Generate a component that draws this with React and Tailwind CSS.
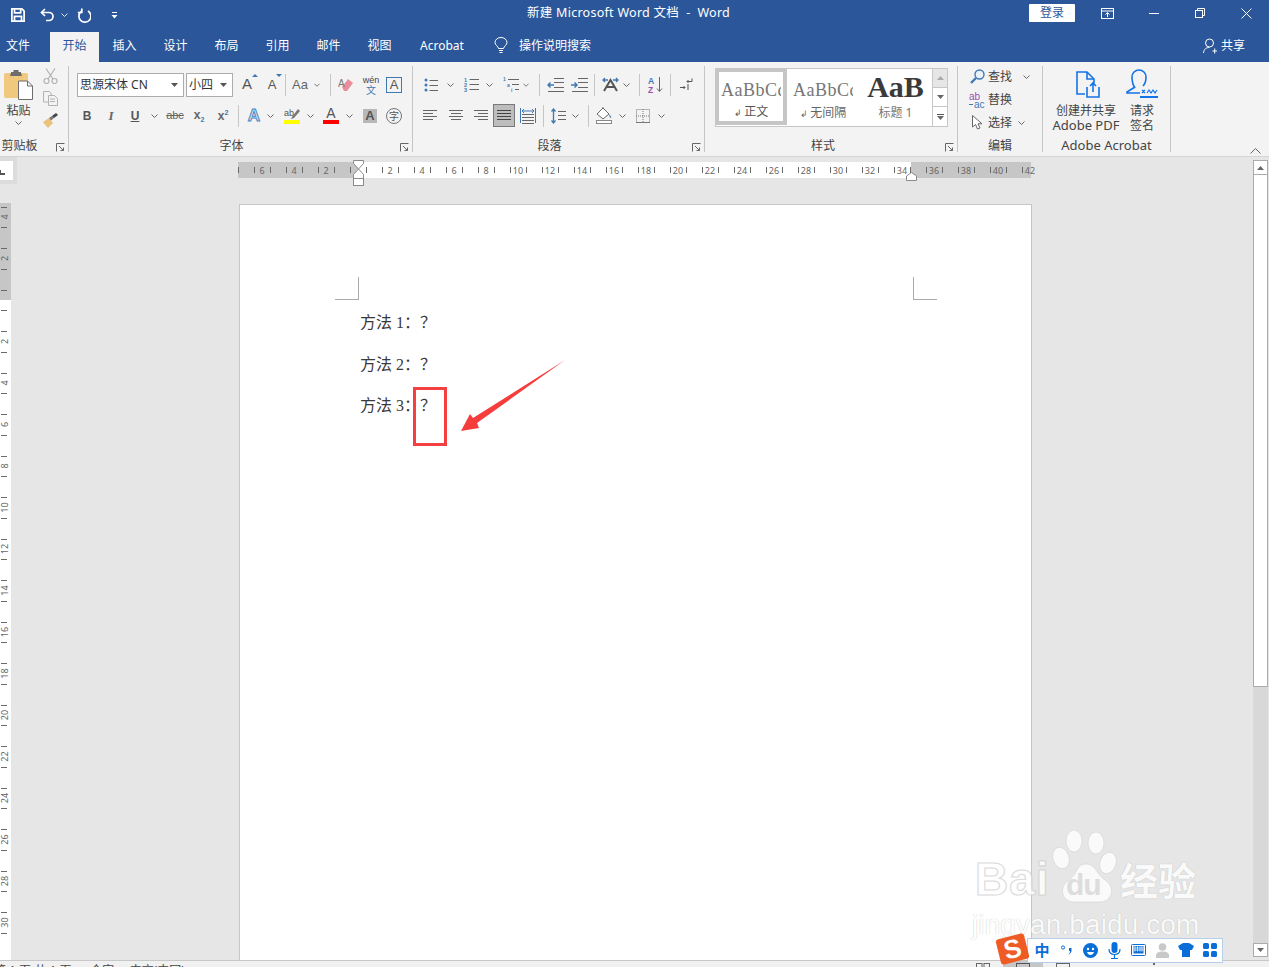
import React from "react";

const Chev = ({ c = "#666" }) => (
  <svg width="7" height="4" viewBox="0 0 7 4" fill="none" stroke={c} strokeWidth="1"><path d="M0.5 0.5 3.5 3.5 6.5 0.5" /></svg>
);
const Cell = ({ className = "w-[24px]", children }) => (
  <div className={`flex h-full items-center justify-center shrink-0 ${className}`}>{children}</div>
);
const Sep = ({ className = "" }) => <div className={`w-px h-[22px] shrink-0 bg-[#c6c6c6] ${className}`} />;
const Launcher = () => (
  <svg className="absolute right-[3px] bottom-0" width="9" height="9" viewBox="0 0 9 9" fill="none" stroke="#666" strokeWidth="1">
    <path d="M0.5 8.5V0.5H8.5" /><path d="M3 3 7.5 7.5M7.5 4.5V7.5H4.5" />
  </svg>
);
const Group = ({ className, label, labelClass = "text-[12px]", launcher, children }) => (
  <div className={`relative flex flex-col h-[86px] shrink-0 border-r border-[#c6c6c6] ${className}`}>
    <div className="h-[72px]">{children}</div>
    <div className={`h-[14px] leading-[15px] text-center text-[#444] whitespace-nowrap ${labelClass}`}>{label}</div>
    {launcher && <Launcher />}
  </div>
);
const Row = ({ className = "", children }) => <div className={`flex items-center h-[23px] ${className}`}>{children}</div>;
const Lines = ({ rows, c = "#666" }) => (
  <svg width="16" height="14" viewBox="0 0 16 14" stroke={c} strokeWidth="1">
    {rows.map((r, i) => <path key={i} d={`M${r[0]} ${r[2] + 0.5}H${r[1]}`} />)}
  </svg>
);

function Ruler() {
  const ticks = [];
  for (let x = 238; x <= 1031; x += 16) ticks.push(x);
  const labels = [];
  for (let k = -3; k <= 21; k++) if (k !== 0) labels.push({ x: 358 + 32 * k, t: Math.abs(k) * 2 });
  return (
    <svg className="ml-[238px] block overflow-visible" width="793" height="16" viewBox="238 162 793 16">
      <rect x="238" y="162" width="120" height="16" fill="#c6c6c6" />
      <rect x="358" y="162" width="553" height="16" fill="#fff" />
      <rect x="911" y="162" width="120" height="16" fill="#c6c6c6" />
      {ticks.map((x) => <rect key={x} x={x} y="167" width="1" height="6" fill="#6a6a6a" />)}
      {labels.map((l) => (
        <text key={l.x} x={l.x} y="174" textAnchor="middle" fontSize="9" fill="#666" fontFamily="Noto Sans">{l.t}</text>
      ))}
    </svg>
  );
}

function VRuler() {
  const items = [];
  for (let k = -2; k <= 15; k++) {
    const y = 97 + 41.5 * k;
    if (k !== 0) items.push(<text key={k} x="0" y="0" transform={`translate(7.5 ${y}) rotate(-90)`} textAnchor="middle" fontSize="9" fill="#666" fontFamily="Noto Sans">{Math.abs(k) * 2}</text>);
  }
  const ticks = [];
  for (let i = 0; i < 36; i++) {
    const y = 3.6 + 20.75 * i;
    ticks.push(<rect key={i} x="1" y={Math.round(y)} width="6" height="1" fill="#6a6a6a" />);
  }
  return (
    <svg className="block" width="12" height="757" viewBox="0 0 12 757">
      <rect width="11" height="97" fill="#c6c6c6" />
      <rect y="97" width="11" height="660" fill="#fff" />
      {ticks}
      {items}
    </svg>
  );
}

const IconSave = () => (
  <svg width="14" height="14" viewBox="0 0 16 16" fill="none" stroke="#fff" strokeWidth="2">
    <path d="M1 1H12.5L15 3.5V15H1Z" /><path d="M4 1V5.5H11V1" /><path d="M4 15V9.5H12V15" />
  </svg>
);
const IconUndo = () => (
  <svg width="15" height="14" viewBox="0 0 15 14" fill="none" stroke="#fff" strokeWidth="1.7">
    <path d="M1.5 4.5H9A4 4 0 0 1 9 12.5H6" /><path d="M5 1 1.5 4.5 5 8" />
  </svg>
);
const IconRedo = () => (
  <svg width="14" height="15" viewBox="0 0 14 15" fill="none" stroke="#fff" strokeWidth="1.7">
    <path d="M4.5 3.2A6 6 0 1 0 11 3" /><path d="M4.8 0.5V4.5H0.8" />
  </svg>
);

const TitleBar = () => (
  <div className="flex items-center h-[31px] bg-[#2b579a] text-white shrink-0">
    <div className="flex items-center w-[527px] h-full pb-[1px]">
      <div className="w-[11px]" />
      <IconSave />
      <div className="w-[15px]" />
      <IconUndo />
      <div className="w-[6px]" />
      <Chev c="#dfe6f0" />
      <div className="w-[9px]" />
      <IconRedo />
      <div className="w-[20px]" />
      <svg width="7" height="7" viewBox="0 0 7 7" fill="#fff"><rect x="1" y="0" width="5" height="1" /><path d="M0.5 3H6.5L3.5 6.5Z" /></svg>
    </div>
    <div className="text-[12.5px] pb-[4px] whitespace-pre tracking-[0.27px]">新建 Microsoft Word 文档  -  Word</div>
    <div className="ml-auto flex items-center h-full pb-[5px]">
      <div className="w-[46px] h-[18px] bg-white rounded-[1px] text-[#2b579a] text-[12px] leading-[18px] text-center">登录</div>
      <div className="w-[26px]" />
      <svg width="13" height="11" viewBox="0 0 13 11" fill="none" stroke="#fff"><rect x="0.5" y="0.5" width="12" height="10" /><path d="M0.5 3H12.5M6.5 9V5M4.5 6.5 6.5 4.5 8.5 6.5" /></svg>
      <div className="w-[35px]" />
      <svg width="10" height="1" viewBox="0 0 10 1"><rect width="10" height="1" fill="#fff" /></svg>
      <div className="w-[36px]" />
      <svg width="10" height="10" viewBox="0 0 10 10" fill="none" stroke="#fff"><rect x="0.5" y="2.5" width="7" height="7" /><path d="M2.5 2.5V0.5H9.5V7.5H7.5" /></svg>
      <div className="w-[36px]" />
      <svg width="11" height="11" viewBox="0 0 11 11" fill="none" stroke="#fff"><path d="M0.5 0.5 10.5 10.5M10.5 0.5 0.5 10.5" /></svg>
      <div className="w-[17px]" />
    </div>
  </div>
);

const Tab = ({ children }) => <div className="w-[51px] text-center">{children}</div>;
const TabBar = () => (
  <div className="flex items-end h-[31px] bg-[#2b579a] text-white text-[12px] shrink-0">
    <div className="w-[36px] h-full leading-[29px] text-center">文件</div>
    <div className="ml-[14px] w-[49px] h-[30px] leading-[28px] bg-[#f3f3f3] text-[#2b579a] text-center">开始</div>
    <div className="flex h-full items-center pb-[2px]">
      <Tab>插入</Tab><Tab>设计</Tab><Tab>布局</Tab><Tab>引用</Tab><Tab>邮件</Tab><Tab>视图</Tab>
      <div className="ml-[14px] w-[46px] text-center">Acrobat</div>
      <div className="ml-[28px] w-[16px] flex justify-center">
        <svg width="14" height="17" viewBox="0 0 14 17" fill="none" stroke="#fff"><path d="M4.5 11.5C4 9 1 8 1 5.5A6 5 0 0 1 13 5.5C13 8 10 9 9.5 11.5Z" /><path d="M5 13.5H9M5.5 15.5H8.5" /></svg>
      </div>
      <div className="ml-[10px]">操作说明搜索</div>
    </div>
    <div className="ml-auto flex h-full items-center pr-[24px] pb-[2px]">
      <svg width="14" height="16" viewBox="0 0 14 16" fill="none" stroke="#fff"><circle cx="6.5" cy="5" r="4" /><path d="M0.5 15C1 11 3 9.5 6.5 9.5M9.5 13H14M11.7 10.5V15.5" /></svg>
      <span className="ml-[4px]">共享</span>
    </div>
  </div>
);

const Select = ({ className, text }) => (
  <div className={`flex items-center justify-between self-start h-[24px] bg-white border border-[#acacac] pl-[2px] pr-[5px] text-[12px] text-[#333] whitespace-pre ${className}`}>
    <span>{text}</span>
    <svg width="7" height="4" viewBox="0 0 7 4" fill="#555"><path d="M0 0H7L3.5 4Z" /></svg>
  </div>
);
const Ltr = ({ className = "", children }) => <span className={`font-['Liberation_Sans',sans-serif] ${className}`}>{children}</span>;

const Clipboard = () => (
  <Group className="w-[69px]" label={<span className="block pr-[29px]">剪贴板</span>} launcher>
    <div className="flex h-full">
      <div className="w-[37px] flex flex-col items-center pt-[4px]">
        <svg width="29" height="30" viewBox="0 0 29 30">
          <rect x="0" y="3" width="24" height="25" rx="2" fill="#f0c87e" />
          <path d="M7 3V2H9.5V0H14.5V2H17V3L18 6H6Z" fill="#6d6d6d" />
          <path d="M14.5 11H23.5L28.5 16V29.5H14.5Z" fill="#fff" stroke="#6d6d6d" />
          <path d="M23.5 11V16H28.5" fill="none" stroke="#6d6d6d" />
        </svg>
        <div className="text-[12px] leading-[14px] mt-[4px] text-[#444]">粘贴</div>
        <div className="mt-[3px]"><Chev /></div>
      </div>
      <div className="flex flex-col items-center w-[26px] pt-[2px]">
        <svg width="15" height="16" viewBox="0 0 15 16" fill="none" stroke="#b2b2b2" strokeWidth="1.2"><path d="M3 0.5 10 11M12 0.5 5 11" /><circle cx="3.5" cy="13" r="2.5" /><circle cx="11.5" cy="13" r="2.5" /></svg>
        <svg className="mt-[7px]" width="15" height="15" viewBox="0 0 15 15" fill="none" stroke="#b2b2b2"><path d="M0.5 0.5H6.5L8 2V11H0.5Z" fill="#f3f3f3" /><path d="M5.5 4.5H11.5L14.5 7.5V14.5H5.5Z" fill="#f3f3f3" /><path d="M7 8H12M7 10.5H12" /></svg>
        <svg className="mt-[7px]" width="16" height="15" viewBox="0 0 16 15"><path d="M1 9 7 5 11 10 6 15Q3 12 1 9Z" fill="#eac27c" /><path d="M7 5 10 3 12 5 9 7.5 11 10Z" fill="#777" /><path d="M10 3 14 0 16 2 12 5Z" fill="#444" /></svg>
      </div>
    </div>
  </Group>
);

const FontGroup = () => (
  <Group className="w-[344px]" label={<span className="block pr-[18px]">字体</span>} launcher>
    <div className="pt-[7px]">
      <Row className="pl-[8px]">
        <Select className="w-[107px]" text="思源宋体 CN" />
        <Select className="w-[47px] ml-[2px]" text="小四" />
        <Cell className="w-[24px] ml-[2px]"><Ltr className="text-[15px] text-[#555] relative">A<svg className="absolute -right-[6px] top-[1px]" width="6" height="3" viewBox="0 0 6 3" fill="#3f79b5"><path d="M0 3 3 0 6 3Z" /></svg></Ltr></Cell>
        <Cell className="w-[24px] ml-[1px]"><Ltr className="text-[13px] text-[#555] relative">A<svg className="absolute -right-[6px] -top-[1px]" width="6" height="3" viewBox="0 0 6 3" fill="#3f79b5"><path d="M0 0 3 3 6 0Z" /></svg></Ltr></Cell>
        <Sep className="ml-[1px]" />
        <Cell className="w-[28px]"><Ltr className="text-[13px] text-[#666]">Aa</Ltr></Cell>
        <Cell className="w-[6px]"><Chev /></Cell>
        <Sep className="ml-[10px]" />
        <Cell className="w-[24px] ml-[3px]">
          <svg width="16" height="16" viewBox="0 0 16 16"><path d="M4 10 10 2 15 6 9 14H6Z" fill="#ea8e9c" /><text x="0" y="10" fontSize="10" fill="#777" fontFamily="Liberation Sans">A</text></svg>
        </Cell>
        <Cell className="w-[24px] ml-[1px]">
          <div className="flex flex-col items-center leading-[10px]">
            <Ltr className="text-[9px] text-[#444]">wén</Ltr>
            <span className="text-[10px] text-[#3f79b5]">文</span>
          </div>
        </Cell>
        <Cell className="w-[22px]"><div className="w-[16px] h-[16px] border border-[#3f79b5] flex items-center justify-center"><Ltr className="text-[13px] leading-[14px] text-[#555]">A</Ltr></div></Cell>
      </Row>
      <Row className="mt-[8px] pl-[6px]">
        <Cell><Ltr className="text-[12px] font-bold text-[#555]">B</Ltr></Cell>
        <Cell><span className="font-['Liberation_Serif',serif] text-[13px] italic font-bold text-[#666]">I</span></Cell>
        <Cell><Ltr className="text-[12px] font-bold underline text-[#555]">U</Ltr></Cell>
        <Cell className="w-[14px]"><Chev /></Cell>
        <Cell className="w-[24px] ml-[2px]"><Ltr className="text-[11px] line-through text-[#666]">abc</Ltr></Cell>
        <Cell><Ltr className="text-[12px] font-bold text-[#666]">x<span className="text-[7px] text-[#3f79b5] align-sub">2</span></Ltr></Cell>
        <Cell><Ltr className="text-[12px] font-bold text-[#666]">x<span className="text-[7px] text-[#3f79b5] align-super">2</span></Ltr></Cell>
        <Sep className="ml-[3px]" />
        <Cell className="w-[24px] ml-[3px]"><Ltr className="text-[17px] text-[#dbe7f4] font-bold [-webkit-text-stroke:1px_#4a86c5]">A</Ltr></Cell>
        <Cell className="w-[8px]"><Chev /></Cell>
        <Cell className="w-[24px] ml-[6px]">
          <div className="flex flex-col items-center">
            <svg width="16" height="12" viewBox="0 0 16 12"><text x="0" y="8" fontSize="9" fill="#555" fontFamily="Liberation Sans">ab</text><path d="M8 9 14 1 16 3 10 10 7 11Z" fill="#777" /></svg>
            <div className="w-[16px] h-[4px] bg-[#ffff00]" />
          </div>
        </Cell>
        <Cell className="w-[12px]"><Chev /></Cell>
        <Cell className="w-[24px] ml-[3px]">
          <div className="flex flex-col items-center">
            <Ltr className="text-[14px] leading-[13px] text-[#555]">A</Ltr>
            <div className="w-[16px] h-[4px] bg-[#ff0000]" />
          </div>
        </Cell>
        <Cell className="w-[12px]"><Chev /></Cell>
        <Cell className="w-[24px] ml-[3px]"><div className="w-[14px] h-[14px] bg-[#b8b8b8] flex items-center justify-center"><Ltr className="text-[13px] leading-[14px] font-bold text-[#555]">A</Ltr></div></Cell>
        <Cell><div className="w-[16px] h-[16px] rounded-full border border-[#777] flex items-center justify-center text-[10px] leading-none text-[#555]">字</div></Cell>
      </Row>
    </div>
  </Group>
);

const Bullets = () => (
  <svg width="14" height="14" viewBox="0 0 14 14"><g fill="#3f79b5"><circle cx="2" cy="2" r="1.5" /><circle cx="2" cy="7" r="1.5" /><circle cx="2" cy="12" r="1.5" /></g><path d="M5.5 2.5H14M5.5 7.5H14M5.5 12.5H14" stroke="#666" /></svg>
);
const Numbers = () => (
  <svg width="15" height="15" viewBox="0 0 15 15"><g fill="#3f79b5" fontSize="5.5" fontFamily="Liberation Sans" fontWeight="bold"><text x="0" y="5">1</text><text x="0" y="10">2</text><text x="0" y="15">3</text></g><path d="M5.5 2.5H15M5.5 7.5H15M5.5 12.5H15" stroke="#666" /></svg>
);
const Multi = () => (
  <svg width="16" height="15" viewBox="0 0 16 15"><g fill="#3f79b5" fontSize="5" fontFamily="Liberation Sans" fontWeight="bold"><text x="0" y="4">1</text><text x="4" y="10">a</text><text x="8" y="15">i</text></g><path d="M5 2.5H16M9 7.5H16M12 12.5H16" stroke="#666" /></svg>
);
const Outdent = ({ flip }) => (
  <svg width="17" height="14" viewBox="0 0 17 14" fill="none"><path d="M7 0.5H17M7 4.5H17M7 9.5H17M1 13.5H17" stroke="#666" /><path d={flip ? "M0 7H6M3.5 4.5 6 7 3.5 9.5" : "M1 7H7M3.5 4.5 1 7 3.5 9.5"} stroke="#3f79b5" strokeWidth="1.5" /></svg>
);

const Paragraph = () => (
  <Group className="w-[292px]" label={<span className="block pr-[18px]">段落</span>} launcher>
    <div className="pt-[7px]">
      <Row className="pl-[6px]">
        <Cell><Bullets /></Cell>
        <Cell className="w-[14px]"><Chev /></Cell>
        <Cell className="w-[24px] ml-[2px]"><Numbers /></Cell>
        <Cell className="w-[12px]"><Chev /></Cell>
        <Cell className="w-[24px] ml-[4px]"><Multi /></Cell>
        <Cell className="w-[6px]"><Chev /></Cell>
        <Sep className="ml-[10px]" />
        <Cell className="w-[24px] ml-[3px]"><Outdent /></Cell>
        <Cell><Outdent flip /></Cell>
        <Sep className="ml-[3px]" />
        <Cell className="w-[24px] ml-[3px]">
          <svg width="17" height="15" viewBox="0 0 17 15" fill="none"><path d="M1 3H6M3 1 1 3 3 5M11 3H16M14 1 16 3 14 5" stroke="#3f79b5" strokeWidth="1.3" /><path d="M2 14 8.5 3 15 14M5 10H12" stroke="#555" strokeWidth="2" /></svg>
        </Cell>
        <Cell className="w-[8px]"><Chev /></Cell>
        <Sep className="ml-[9px]" />
        <Cell className="w-[24px] ml-[3px]">
          <svg width="15" height="17" viewBox="0 0 15 17" fill="none"><text x="0" y="8" fontSize="8.5" fontFamily="Liberation Sans" fontWeight="bold" fill="#3f79b5">A</text><text x="0" y="16.5" fontSize="8.5" fontFamily="Liberation Sans" fontWeight="bold" fill="#9a4fb0">Z</text><path d="M11.5 1V15M9 12.5 11.5 15.5 14 12.5" stroke="#666" /></svg>
        </Cell>
        <Sep className="ml-[3px]" />
        <Cell className="w-[24px] ml-[3px]">
          <svg width="13" height="13" viewBox="0 0 13 13" fill="none" stroke="#555"><path d="M12 0.5V3.5H7M8.5 2 7 3.5 8.5 5" /><path d="M0 9.5H5M3.5 8 5 9.5 3.5 11M8 6V12" /></svg>
        </Cell>
      </Row>
      <Row className="mt-[8px] pl-[6px]">
        <Cell><Lines rows={[[0,14,1],[0,10,4],[0,14,7],[0,10,10]]} /></Cell>
        <Cell className="w-[24px] ml-[1px]"><Lines rows={[[1,15,1],[3,13,4],[1,15,7],[3,13,10]]} /></Cell>
        <Cell><Lines rows={[[2,16,1],[6,16,4],[2,16,7],[6,16,10]]} /></Cell>
        <Cell className="w-[22px] ml-[1px] bg-[#bdbdbd] border border-[#7a7a7a] h-[23px]"><Lines c="#444" rows={[[1,15,1],[1,15,4],[1,15,7],[1,15,10]]} /></Cell>
        <Cell className="w-[24px] ml-[1px]">
          <svg width="16" height="16" viewBox="0 0 16 16" fill="none"><path d="M0.5 0V15M15.5 0V15" stroke="#3f79b5" /><path d="M2 3H14M4 1 2 3 4 5M12 1 14 3 12 5" stroke="#3f79b5" /><path d="M2 6.5H14M2 9.5H14M2 12.5H14M2 15.5H14" stroke="#666" /></svg>
        </Cell>
        <Sep className="ml-[3px]" />
        <Cell className="w-[24px] ml-[2px]">
          <svg width="15" height="16" viewBox="0 0 15 16" fill="none"><path d="M2.5 1V15M0.5 3.5 2.5 1 4.5 3.5M0.5 12.5 2.5 15 4.5 12.5" stroke="#3f79b5" strokeWidth="1.3" /><path d="M7 3.5H15M7 7.5H15M7 11.5H15" stroke="#666" /></svg>
        </Cell>
        <Cell className="w-[10px]"><Chev /></Cell>
        <Sep className="ml-[8px]" />
        <Cell className="w-[24px] ml-[3px]">
          <svg width="16" height="17" viewBox="0 0 16 17" fill="none"><path d="M1 7 7 1 13 7 7 12Z" fill="#fff" stroke="#666" /><path d="M13 7Q16 10 15 11 13 10 13 7Z" fill="#3f79b5" /><path d="M7 1V-1" stroke="#3f79b5" /><rect x="0.5" y="13.5" width="15" height="3" fill="#fff" stroke="#888" /></svg>
        </Cell>
        <Cell className="w-[12px]"><Chev /></Cell>
        <Cell className="w-[24px] ml-[3px]">
          <svg width="14" height="14" viewBox="0 0 14 14" fill="none" stroke="#777" strokeDasharray="1 1"><rect x="0.5" y="0.5" width="13" height="13" /><path d="M7 0V14M0 7H14" /><path d="M0 13.5H14" strokeDasharray="none" /></svg>
        </Cell>
        <Cell className="w-[12px]"><Chev /></Cell>
      </Row>
    </div>
  </Group>
);

const StyleItem = ({ className = "", sample, name }) => (
  <div className={`h-full overflow-hidden flex flex-col items-center shrink-0 ${className}`}>
    {sample}
    {name}
  </div>
);
const ScrollCell = ({ className, d, bar, fill = "#666" }) => (
  <div className={`h-[19px] flex flex-col items-center justify-center gap-[1px] border-b border-[#c6c6c6] ${className}`}>
    {bar && <div className="w-[7px] h-px bg-[#555]" />}
    <svg width="7" height="4" viewBox="0 0 7 4" fill={fill}><path d={d} /></svg>
  </div>
);

const Styles = () => (
  <Group className="w-[253px]" label={<span className="block pr-[16px]">样式</span>} launcher>
    <div className="pl-[10px] pt-[2px]">
      <div className="flex w-[233px] h-[59px] border border-[#c6c6c6] bg-white">
        <StyleItem
          className="w-[72px] border-[4px] border-[#c6c6c6] pt-[6px] -my-px -ml-px"
          sample={<div className="w-[60px] h-[24px] overflow-hidden whitespace-nowrap font-['Liberation_Serif',serif] text-[18px] leading-[24px] tracking-[0.5px] text-[#777]">AaBbCc</div>}
          name={<div className="text-[12px] leading-[16px] mt-[3px] text-[#555] whitespace-pre"><span className="text-[9px]">↲ </span>正文</div>}
        />
        <StyleItem
          className="w-[72px] pt-[9px]"
          sample={<div className="w-[60px] h-[24px] overflow-hidden whitespace-nowrap font-['Liberation_Serif',serif] text-[18px] leading-[24px] tracking-[0.5px] text-[#777]">AaBbCc</div>}
          name={<div className="text-[12px] leading-[16px] mt-[3px] text-[#666] whitespace-pre"><span className="text-[9px]">↲ </span>无间隔</div>}
        />
        <StyleItem
          className="w-[73px] pt-[1px]"
          sample={<div className="font-['Liberation_Serif',serif] font-bold text-[30px] leading-[34px] text-[#3a3a3a]">AaB</div>}
          name={<div className="text-[12px] leading-[16px] mt-[1px] text-[#777] whitespace-pre">标题 1</div>}
        />
        <div className="flex-1 flex flex-col border-l border-[#c6c6c6]">
          <ScrollCell className="bg-[#e6e6e6]" d="M0 4H7L3.5 0Z" fill="#aaaaaa" />
          <ScrollCell className="" d="M0 0H7L3.5 4Z" />
          <ScrollCell className="border-b-0" d="M0 0H7L3.5 4Z" bar />
        </div>
      </div>
    </div>
  </Group>
);

const EditRow = ({ icon, text, chev, chevClass = "ml-[10px]" }) => (
  <div className="flex items-center h-[23px] pl-[8px] text-[12px] text-[#444]">
    <div className="w-[22px] flex justify-center">{icon}</div>
    <span>{text}</span>
    {chev && <span className={`flex ${chevClass}`}><Chev /></span>}
  </div>
);
const Editing = () => (
  <Group className="w-[85px]" label="编辑">
    <div className="-mt-[1px]">
      <EditRow
        text="查找"
        chev
        chevClass="ml-[11px]"
        icon={<svg width="15" height="15" viewBox="0 0 15 15" fill="none"><circle cx="9.5" cy="5.5" r="4.5" stroke="#3f79b5" strokeWidth="1.4" fill="#eaf2fa" /><path d="M6 9 1 14" stroke="#3f79b5" strokeWidth="2.4" /></svg>}
      />
      <EditRow
        text="替换"
        icon={<svg width="17" height="16" viewBox="0 0 17 16"><text x="0" y="8" fontSize="10" fontFamily="Liberation Sans" fill="#9a4fb0">ab</text><text x="5" y="16" fontSize="10" fontFamily="Liberation Sans" fill="#3f79b5">ac</text><path d="M0 12.5H4" stroke="#3f79b5" /></svg>}
      />
      <EditRow
        text="选择"
        chev
        chevClass="ml-[6px]"
        icon={<svg width="11" height="15" viewBox="0 0 11 15" fill="#fff" stroke="#666"><path d="M0.5 0.5V12L3.5 9.5 5.5 14 8 13 6 8.8H10Z" /></svg>}
      />
    </div>
  </Group>
);

const BigBtn = ({ className, icon, l1, l2 }) => (
  <div className={`flex flex-col items-center ${className}`}>
    <div className="h-[32px] flex items-end">{icon}</div>
    <div className="text-[12px] leading-[15px] mt-[5px] text-[#444] whitespace-nowrap">{l1}</div>
    <div className="text-[13px] leading-[15px] text-[#444] whitespace-nowrap">{l2}</div>
  </div>
);
const Acrobat = () => (
  <Group className="w-[128px]" label="Adobe Acrobat" labelClass="text-[13px]">
    <div className="flex">
      <BigBtn
        className="w-[86px]"
        l1="创建并共享"
        l2="Adobe PDF"
        icon={<svg className="ml-[3px]" width="24" height="27" viewBox="0 0 24 27" fill="none" stroke="#1473e6" strokeWidth="1.6"><path d="M9 23H1V1H11L18 8V12" /><path d="M11 1V8H18" /><path d="M11 16V26H23V16" /><path d="M17 21V12M14 15 17 12 20 15" /></svg>}
      />
      <BigBtn
        className="w-[30px] ml-[-2px]"
        l1="请求"
        l2={<span className="text-[12px]">签名</span>}
        icon={<svg width="32" height="29" viewBox="0 0 32 29" fill="none" stroke="#1473e6" strokeWidth="1.6"><path d="M9 19C6 15 6 12 6 8A7 7 0 0 1 20 8C20 12 19 15 17 17" /><path d="M9 18 1 23V24H14" /><path d="M16 21 19 24M19 21 16 24M21 24 23 21 25 24 27 21 29 24 31 21" strokeWidth="1.2" /><path d="M14 28H32" strokeWidth="2" /></svg>}
      />
    </div>
  </Group>
);

const Ribbon = () => (
  <div className="relative flex h-[95px] pt-[4px] bg-[#f3f3f3] border-b border-[#d4d4d4] text-[#444] shrink-0">
    <Clipboard />
    <FontGroup />
    <Paragraph />
    <Styles />
    <Editing />
    <Acrobat />
    <svg className="absolute right-[8px] bottom-[2px]" width="11" height="6" viewBox="0 0 11 6" fill="none" stroke="#666"><path d="M0.5 5.5 5.5 0.5 10.5 5.5" /></svg>
  </div>
);

const Line = ({ n }) => (
  <p className="h-[41.5px] leading-[41.5px] text-[16px] text-[#3a3a3a] whitespace-pre font-['Liberation_Serif','Noto_Sans_CJK_SC',serif]">{`方法 ${n}\uFF1A\uFF1F`}</p>
);

const Page = () => (
  <div className="w-[793px] mt-[1px] h-[756px] shrink-0 bg-white border border-b-0 border-[#c6c6c6] pt-[72px] ml-[239px] pl-[95px] pr-[94px]">
    <div className="flex justify-between">
      <div className="w-[24px] h-[23px] border-r border-b border-[#aaaaaa]" />
      <div className="w-[24px] h-[23px] border-l border-b border-[#aaaaaa]" />
    </div>
    <div className="pl-[25px] pt-[2px]">
      <Line n="1" />
      <Line n="2" />
      <Line n="3" />
    </div>
  </div>
);

const Scrollbar = () => (
  <div className="w-[16px] flex flex-col pt-[3px] pr-[1px] shrink-0">
    <div className="h-[15px] bg-white border border-[#ababab] flex items-center justify-center">
      <svg width="7" height="4" viewBox="0 0 7 4" fill="#666"><path d="M0 4H7L3.5 0Z" /></svg>
    </div>
    <div className="h-[512px] bg-white border-x border-b border-[#ababab]" />
    <div className="flex-1 bg-[#d8d8d8]" />
    <div className="h-[14px] bg-white border border-[#ababab] flex items-center justify-center">
      <svg width="7" height="4" viewBox="0 0 7 4" fill="#666"><path d="M0 0H7L3.5 4Z" /></svg>
    </div>
    <div className="h-[3px] bg-[#e6e6e6]" />
  </div>
);

const Workspace = () => (
  <div className="flex flex-1 min-h-0 bg-[#e6e6e6]">
    <div className="flex-1 flex flex-col relative">
      <div className="h-[46px] pt-[5px] shrink-0">
        <Ruler />
      </div>
      <div className="flex flex-1 min-h-0">
        <div className="w-0"><VRuler /></div>
        <Page />
      </div>
      <div className="absolute left-0 top-0 w-[17px] h-[27px] bg-[#dcdcdc] pt-[4px]">
        <div className="w-[13px] h-[19px] bg-white flex items-end pb-[5px]">
          <div className="w-[6px] h-[5px] border-l-[2px] border-b-[2px] border-[#555] -ml-[1px]" />
        </div>
      </div>
      <svg className="absolute left-[352px] top-[3px]" width="13" height="27" viewBox="0 0 13 27" fill="#fff" stroke="#8a8a8a">
        <path d="M1.5 0.5H11.5V3.5L6.5 9 1.5 3.5Z" />
        <path d="M6.5 9 11.5 14.5V18.5H1.5V14.5Z" />
        <rect x="1.5" y="18.5" width="10" height="7" />
      </svg>
      <svg className="absolute left-[905px] top-[15px]" width="13" height="9" viewBox="0 0 13 9" fill="#fff" stroke="#8a8a8a"><path d="M1.5 8.5V4L6.5 0.5 11.5 4V8.5Z" /></svg>
    </div>
    <Scrollbar />
  </div>
);

const StatusBar = () => (
  <div className="relative h-[7px] bg-[#f1f1f1] border-t border-[#c8c8c8] overflow-hidden shrink-0 flex items-start text-[12px] leading-[16px] text-[#444]">
    <span className="whitespace-pre ml-[-6px] mt-[2px]">第 1 页,共 1 页      个字     中文(中国)</span>
    <div className="ml-auto flex items-start mr-[114px] h-full">
      <svg className="mt-[2px]" width="14" height="6" viewBox="0 0 14 6" fill="none" stroke="#666"><rect x="0.5" y="0.5" width="5.5" height="12" /><rect x="8" y="0.5" width="5.5" height="12" /></svg>
      <div className="ml-[13px] w-[40px] h-full bg-[#c6c6c6] flex justify-center">
        <svg className="mt-[2px]" width="14" height="6" viewBox="0 0 14 6" fill="none" stroke="#555"><rect x="0.5" y="0.5" width="13" height="12" /></svg>
      </div>
      <svg className="ml-[13px] mt-[2px]" width="14" height="6" viewBox="0 0 14 6" fill="none" stroke="#666"><rect x="0.5" y="0.5" width="13" height="12" /></svg>
      <div className="ml-[83px] w-[2px] h-[2px] mt-[2px] bg-[#666]" />
    </div>
  </div>
);

const Markup = () => (
  <>
    <div className="absolute left-[413px] top-[387px] w-[34px] h-[59px] border-[3px] border-[#f44040]" />
    <svg className="absolute left-[455px] top-[355px]" width="115" height="82" viewBox="455 355 115 82">
      <path d="M461 431 470 414 473 418 565 360 477 423 479 428Z" fill="#f63d3d" />
    </svg>
  </>
);

const Watermark = () => (
  <div className="absolute left-[972px] top-[830px] w-[232px] h-[110px] flex flex-col text-white font-['Liberation_Sans',sans-serif] opacity-80 [text-shadow:0_0_1px_#a8a8a8]">
    <div className="flex items-end h-[72px]">
      <span className="text-[46px] leading-[46px] font-bold ml-[3px] w-[76px] tracking-[1px] [-webkit-text-stroke:1px_#d4d4d4]">Bai</span>
      <div className="relative w-[66px] h-[72px] shrink-0">
        <svg className="absolute left-0 top-0" width="66" height="74" viewBox="0 0 66 74" fill="#fff" stroke="#cfcfcf" strokeWidth="0.6">
          <ellipse cx="10" cy="28" rx="8" ry="11" transform="rotate(-20 10 28)" />
          <ellipse cx="23" cy="11" rx="8" ry="11" />
          <ellipse cx="45" cy="13" rx="8" ry="11" />
          <ellipse cx="57" cy="33" rx="8" ry="11" transform="rotate(20 57 33)" />
          <path d="M35 34C45 34 45 44 54 50 66 58 60 73 48 72H24C12 73 6 58 18 50 27 44 25 34 35 34Z" />
        </svg>
        <span className="absolute left-[15px] top-[40px] text-[30px] leading-[30px] font-bold text-[#dcdcdc] [text-shadow:none] tracking-[-1px]">du</span>
      </div>
      <span className="text-[38px] leading-[46px] font-['Noto_Sans_CJK_SC',sans-serif] font-bold whitespace-nowrap ml-[3px]">经验</span>
    </div>
    <div className="text-[28px] leading-[30px] mt-[8px] tracking-[0.1px] whitespace-nowrap">jingyan.baidu.com</div>
  </div>
);

const Ime = () => (
  <div className="absolute left-[998px] top-[935px] flex items-center h-[27px]">
    <div className="w-[29px] h-[26px] rotate-[-14deg] rounded-[3px] bg-[#ef5b24] flex items-center justify-center text-white font-['Liberation_Sans',sans-serif] font-bold text-[26px] leading-none z-10">S</div>
    <div className="flex items-center w-[196px] h-[25px] mt-[3px] bg-white border border-[#b6cfea] pl-[2px]">
      <div className="w-[24px] text-center font-bold text-[15px] leading-none text-[#0a6ed8]">中</div>
      <div className="w-[25px] flex justify-center">
        <svg width="11" height="10" viewBox="0 0 11 10"><circle cx="2" cy="2.5" r="1.6" fill="none" stroke="#0a6ed8" /><path d="M8 3H10.5V5.5C10.5 7.5 9 9 7.5 9.5 8.5 8.5 9 7.5 9 6H8Z" fill="#0a6ed8" /></svg>
      </div>
      <div className="w-[23px] flex justify-center">
        <svg width="15" height="15" viewBox="0 0 15 15"><circle cx="7.5" cy="7.5" r="7.5" fill="#0a6ed8" /><circle cx="5" cy="6" r="1.2" fill="#fff" /><circle cx="10" cy="6" r="1.2" fill="#fff" /><path d="M4 9H11C10.5 11 9 12 7.5 12S4.5 11 4 9Z" fill="#fff" /></svg>
      </div>
      <div className="w-[24px] flex justify-center">
        <svg width="13" height="17" viewBox="0 0 13 17" fill="none"><rect x="3.5" y="0" width="6" height="11" rx="3" fill="#0a6ed8" /><path d="M1 7C1 11 3 12.5 6.5 12.5S12 11 12 7M6.5 12.5V16M3 16.5H10" stroke="#0a6ed8" strokeWidth="1.2" /></svg>
      </div>
      <div className="w-[24px] flex justify-center">
        <svg width="15" height="12" viewBox="0 0 15 12"><rect x="0.5" y="0.5" width="14" height="11" rx="1" fill="#fff" stroke="#0a6ed8" /><path d="M2.5 2H12.5V9.5H2.5Z" fill="#0a6ed8" /><path d="M4 2V7.5M6.5 2V7.5M9 2V7.5M11 2V7.5M2.5 4H12.5M2.5 6H12.5" stroke="#fff" strokeWidth="0.7" /></svg>
      </div>
      <div className="w-[24px] flex justify-center">
        <svg width="13" height="15" viewBox="0 0 13 15" fill="#c8c8c8"><circle cx="6.5" cy="4" r="3.8" /><path d="M0 15V12C0 10 3 8.5 6.5 8.5S13 10 13 12V15Z" /></svg>
      </div>
      <div className="w-[24px] flex justify-center">
        <svg width="16" height="14" viewBox="0 0 16 14" fill="#0a6ed8"><path d="M5 0H11L16 3 14 7H12V14H4V7H2L0 3Z" /></svg>
      </div>
      <div className="w-[24px] flex justify-center">
        <svg width="14" height="14" viewBox="0 0 14 14" fill="#0a6ed8"><rect width="6" height="6" rx="1.5" /><rect x="8" width="6" height="6" rx="1.5" /><rect y="8" width="6" height="6" rx="1.5" /><rect x="8" y="8" width="6" height="6" rx="1.5" /></svg>
      </div>
    </div>
  </div>
);

export default function App() {
  return (
    <div className="relative w-[1269px] h-[967px] overflow-hidden flex flex-col font-['Noto_Sans','Noto_Sans_CJK_SC',sans-serif]">
      <TitleBar />
      <TabBar />
      <Ribbon />
      <Workspace />
      <StatusBar />
      <Markup />
      <Watermark />
      <Ime />
    </div>
  );
}
